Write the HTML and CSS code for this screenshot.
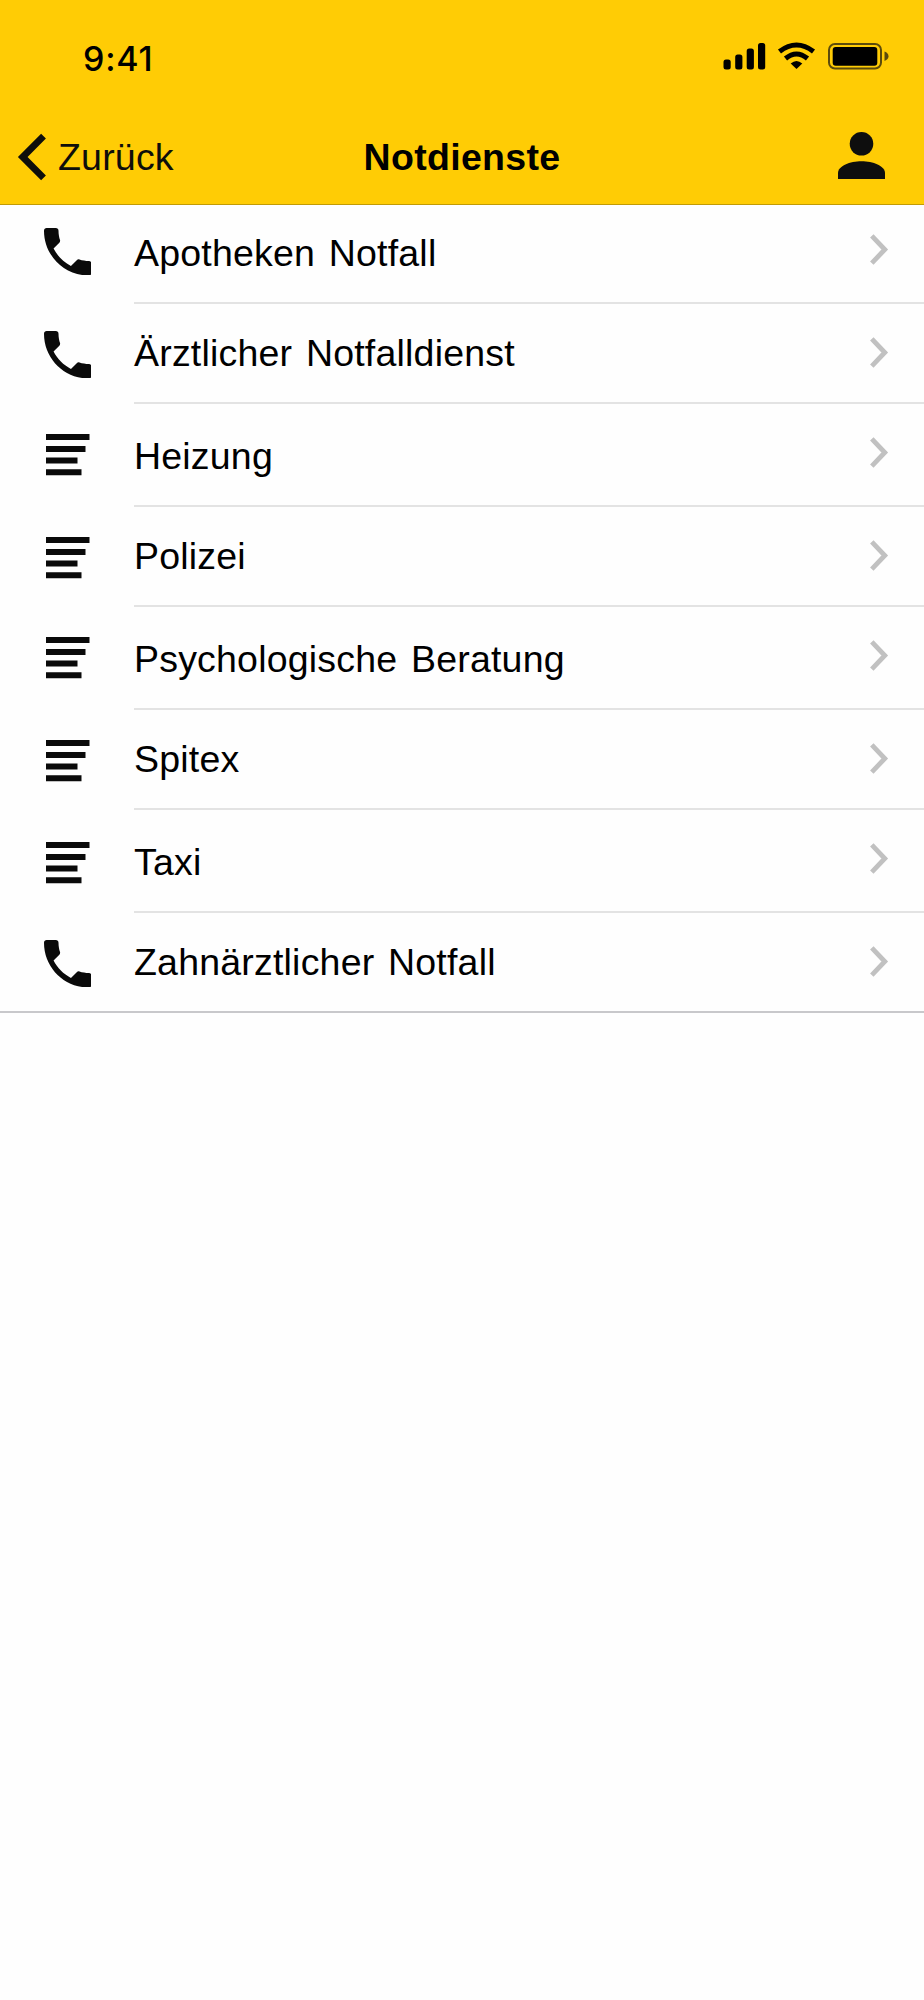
FILE: index.html
```
<!DOCTYPE html>
<html lang="de">
  <head>
    <meta charset="utf-8">
    <title>Notdienste</title>
    <link rel="stylesheet" href="styles.css">
  </head>
  <body>
    <svg class="sprite">
      <symbol id="phone" viewBox="3 3 18 18">
        <path d="M6.620 10.790c1.440 2.830 3.760 5.140 6.590 6.590l2.200-2.200c.27-.27.67-.36 1.020-.24 1.120.37 2.330.57 3.570.57.55 0 1 .45 1 1V20c0 .55-.45 1-1 1C10.610 21 3 13.390 3 4c0-.55.45-1 1-1h3.500c.55 0 1 .45 1 1 0 1.250.2 2.450.57 3.570.11.35.03.74-.25 1.020z"/>
      </symbol>
      <symbol id="lines" viewBox="0 0 44 42">
        <path d="M0 0h43.500v6H0zM0 12h39.500v6H0zM0 23.500h31.500v6H0zM0 35.200h35.500v6H0z"/>
      </symbol>
      <symbol id="next" viewBox="0 0 19 31">
        <path d="M1.800 1.800L14.800 15.500L1.800 29.200" fill="none" stroke="#c1c1c1" stroke-width="4.800"/>
      </symbol>
    </svg>

    <header class="header">
      <div class="statusbar">
        <span class="time">9:41</span>
        <svg class="status-icons" width="168" height="30" viewBox="0 0 168 30">
          <rect x="0.500" y="18.500" width="7.200" height="10" rx="2.500"/>
          <rect x="12.200" y="13.500" width="7.200" height="15" rx="2.500"/>
          <rect x="23.700" y="7.500" width="7.200" height="21" rx="2.500"/>
          <rect x="35" y="2" width="7.200" height="26.500" rx="2.500"/>
          <path d="M56.500 10.500Q73.500 -2.500 90.500 10.500" fill="none" stroke="#000" stroke-width="5"/>
          <path d="M62.500 17.500Q73.500 8.500 84.500 17.500" fill="none" stroke="#000" stroke-width="5"/>
          <path d="M67.700 22.500Q73.500 17.500 79.300 22.500L73.500 28z"/>
          <rect x="106" y="3" width="52" height="24.500" rx="6" fill="none" stroke="#5c4b0c" stroke-width="2"/>
          <rect x="109.700" y="5.900" width="44.600" height="18.800" rx="3"/>
          <path d="M161.500 10.500q4 1.500 4 4.700t-4 4.700z" fill="#5c4b0c"/>
        </svg>
      </div>
      <div class="navbar">
        <a class="back">
          <svg width="30" height="48" viewBox="0 0 30 48">
            <path d="M26.500 3.200L5.700 24L26.500 44.800" fill="none" stroke="#0e0e0b" stroke-width="6.800"/>
          </svg>
          <span>Zurück</span>
        </a>
        <h1 class="title">Notdienste</h1>
        <svg class="profile" width="47" height="47" viewBox="0 0 47 47">
          <circle cx="23.500" cy="11.800" r="11.800"/>
          <path d="M0 47V41C0 34 12 29.300 23.500 29.300S47 34 47 41v6z"/>
        </svg>
      </div>
    </header>

    <ul class="list">
      <li class="row"><svg class="phone"><use href="#phone"/></svg><div class="cell"><span class="label">Apotheken Notfall</span><svg class="next"><use href="#next"/></svg></div></li>
      <li class="row"><svg class="phone"><use href="#phone"/></svg><div class="cell"><span class="label">Ärztlicher Notfalldienst</span><svg class="next"><use href="#next"/></svg></div></li>
      <li class="row"><svg class="lines"><use href="#lines"/></svg><div class="cell"><span class="label">Heizung</span><svg class="next"><use href="#next"/></svg></div></li>
      <li class="row"><svg class="lines"><use href="#lines"/></svg><div class="cell"><span class="label">Polizei</span><svg class="next"><use href="#next"/></svg></div></li>
      <li class="row"><svg class="lines"><use href="#lines"/></svg><div class="cell"><span class="label">Psychologische Beratung</span><svg class="next"><use href="#next"/></svg></div></li>
      <li class="row"><svg class="lines"><use href="#lines"/></svg><div class="cell"><span class="label">Spitex</span><svg class="next"><use href="#next"/></svg></div></li>
      <li class="row"><svg class="lines"><use href="#lines"/></svg><div class="cell"><span class="label">Taxi</span><svg class="next"><use href="#next"/></svg></div></li>
      <li class="row"><svg class="phone"><use href="#phone"/></svg><div class="cell"><span class="label">Zahnärztlicher Notfall</span><svg class="next"><use href="#next"/></svg></div></li>
    </ul>
  </body>
</html>
```
FILE: styles.css
```
* { box-sizing: border-box; }
body {
  margin: 0;
  background: #fefefe;
  color: #000;
  font-family: "Liberation Sans", Arial, sans-serif;
  font-size: 37.5px;
  line-height: 43px;
}
.sprite { display: none; }
svg { display: block; flex: none; }

.header {
  height: 205px;
  background: #ffcc05;
  border-bottom: 1px solid #c19b06;
}
.statusbar {
  display: flex;
  justify-content: space-between;
  height: 109px;
  padding: 41px 33px 0 83px;
}
.time {
  font-family: Inter, sans-serif;
  font-size: 34px;
  font-weight: 500;
  line-height: 36px;
  letter-spacing: 0.8px;
}
.navbar {
  display: grid;
  grid-template-columns: minmax(0, 1fr) auto minmax(0, 1fr);
  align-items: center;
  height: 95px;
  padding: 0 17px;
}
.back {
  display: flex;
  align-items: center;
  gap: 11px;
  color: #0e0e0b;
  letter-spacing: 0.2px;
}
.back span { padding-top: 2px; }
.title {
  margin: 0;
  padding-top: 2px;
  font-size: 37.5px;
  letter-spacing: 0.3px;
}
.profile {
  justify-self: end;
  margin: 0 22px 2px 0;
  fill: #0e0e0e;
}

.list {
  margin: 0;
  padding: 0;
  list-style: none;
  border-bottom: 2px solid #c8c8cb;
}
.row {
  display: flex;
  align-items: flex-start;
  height: 103px;
  padding-left: 43.5px;
}
.row:nth-child(even) { height: 100px; }
/* first row starts slightly under the header */
.row:first-child { margin-top: -4px; }
.row:last-child { height: 98px; }
.phone {
  width: 47.5px;
  height: 47.5px;
  margin-top: 26.5px;
  fill: #0a0a0a;
}
.lines {
  width: 44px;
  height: 42px;
  margin: 29.5px 1.5px 0 2px;
  fill: #0a0a0a;
}
.row:nth-child(7) .lines { margin-top: 32px; }
.cell {
  display: flex;
  flex: 1;
  align-items: flex-start;
  justify-content: space-between;
  height: 100%;
  margin-left: 43px;
  padding-right: 35px;
  border-bottom: 2px solid #e3e3e3;
}
.row:last-child .cell { border-bottom: 0; }
.label {
  margin-top: 31px;
  letter-spacing: 0.2px;
  word-spacing: 3px;
}
.row:nth-child(even) .label { margin-top: 28px; }
.next {
  width: 19px;
  height: 31px;
  margin-top: 33px;
}
```
